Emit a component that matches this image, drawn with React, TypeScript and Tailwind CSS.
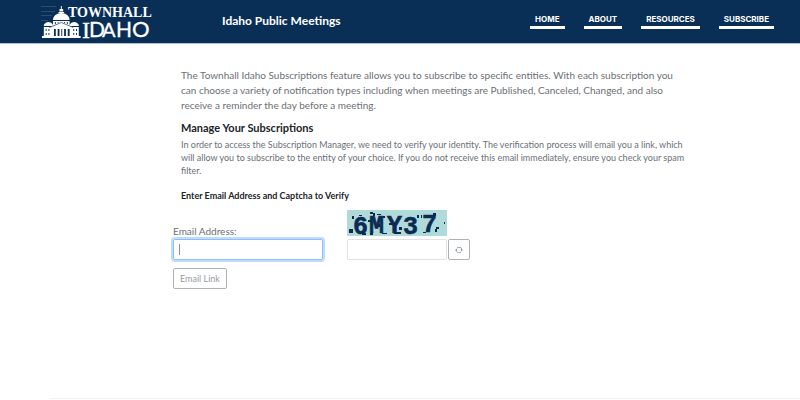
import React from "react";

const navItems = ["HOME", "ABOUT", "RESOURCES", "SUBSCRIBE"];

function Logo() {
  return (
    <svg viewBox="0 0 112 36" className="h-9 w-28 shrink-0 overflow-visible" role="img" aria-label="Townhall Idaho">
      <path d="M1 2.5H16M1 7.5H15M1 11.5H12M1 16.5H8" stroke="#2c4b70" strokeWidth="1" />
      <g transform="translate(2 1) scale(.92 1)">
        <g fill="#fff">
          <path d="M20.5 1h1v3h1.5v2.5h-4V4h1.5z" />
          <path d="M18 7h6v1h-6zM12 15c0-4 4-7 9-7s9 3 9 7z" />
          <path d="M12 16h18v4H12z" />
          <path d="M2 20c1-2 3-3 5-3s4 1 5 3h18c1-2 3-3 5-3s4 1 5 3v1H2z" />
          <path d="M9 22l12-5 12 5v2H9z" />
          <path d="M2 22h38v9H2zM0 31h42v2H0z" />
        </g>
        <g fill="#0a2f57">
          <path d="M14 17h1v2h-1zM17 17h1v1h-1zM24 17h1v1h-1zM27 17h1v2h-1z" />
          <path d="M13 24h2v7h-2zM17 24h2v7h-2zM21 24h1v7h-1zM24 24h2v7h-2zM28 24h2v7h-2z" />
          <path d="M4 24h1v2H4zM7 24h1v2H7zM4 28h1v2H4zM7 28h1v2H7zM34 24h1v2h-1zM37 24h1v2h-1zM34 28h1v2h-1zM37 28h1v2h-1z" />
          <path d="M8 22.5l13-5 13 5" fill="none" stroke="#0a2f57" strokeWidth=".7" />
        </g>
      </g>
      <g fill="#fff">
        <text x="28" y="13" fontSize="14" className="font-['Liberation_Serif'] font-bold">
          TOWNHALL
        </text>
        <text y="33" fontSize="20" stroke="#fff" strokeWidth=".3" className="font-['Lato']">
          <tspan x="42" y="34" fontSize="24" className="font-['Liberation_Serif']">I</tspan>
          <tspan x="49" y="33" fontSize="21">D</tspan>
          <tspan x="62">A</tspan>
          <tspan x="76" fontSize="21">H</tspan>
          <tspan x="92" fontSize="22">O</tspan>
        </text>
      </g>
    </svg>
  );
}

function Captcha() {
  return (
    <svg viewBox="0 0 100 26" className="block h-[26px] w-[100px] overflow-visible" role="img" aria-label="Captcha">
      <defs>
        <pattern id="weave" width="4" height="4" patternUnits="userSpaceOnUse">
          <rect width="4" height="4" fill="#9be4e4" />
          <path d="M0 0h2v2H0zM2 2h2v2H2z" fill="#c6d0cf" />
        </pattern>
      </defs>
      <rect width="100" height="26" fill="url(#weave)" />
      <text
        fill="#0a2b54"
        stroke="#0a2b54"
        strokeWidth=".6"
        fontSize="25"
        className="font-['Liberation_Mono'] font-bold"
      >
        <tspan x="6" y="24">6</tspan>
        <tspan x="22" y="23">M</tspan>
        <tspan x="40">Y</tspan>
        <tspan x="56" y="24">3</tspan>
        <tspan x="75" y="22">7</tspan>
      </text>
      <path
        fill="#0a2b54"
        d="M2 19h4v4H2zM5 6h2v3H5zM12 5h3v1h-3zM23 2h3v2h-3zM26 3h2v3h-2zM30 4h4v1h-4zM21 10h3v2h-3zM36 6h2v2h-2zM23 23h3v2h-3zM35 23h5v1h-5zM47 22h7v2h-7zM52 17h3v3h-3zM42 13h3v2h-3zM66 11h1v3h-1zM70 5h2v3h-2zM74 5h1v3h-1zM77 6h3v2h-3zM86 3h3v3h-3zM76 22h3v1h-3zM89 17h3v2h-3zM88 19h2v3h-2zM97 12h1v2h-1zM15 23h4v2h-4zM30 14h3v3h-3z"
      />
    </svg>
  );
}

function RefreshIcon() {
  return (
    <svg viewBox="0 0 16 16" className="size-2" fill="#6c757d" aria-hidden="true">
      <path d="M11.534 7h3.932a.25.25 0 0 1 .192.41l-1.966 2.36a.25.25 0 0 1-.384 0l-1.966-2.36a.25.25 0 0 1 .192-.41zm-11 2h3.932a.25.25 0 0 0 .192-.41L2.692 6.23a.25.25 0 0 0-.384 0L.342 8.59A.25.25 0 0 0 .534 9z" />
      <path d="M8 3c-1.552 0-2.94.707-3.857 1.818a.5.5 0 1 1-.771-.636A6.002 6.002 0 0 1 13.917 7H12.9A5.002 5.002 0 0 0 8 3zM3.1 9a5.002 5.002 0 0 0 8.757 2.182.5.5 0 1 1 .771.636A6.002 6.002 0 0 1 2.083 9H3.1z" />
    </svg>
  );
}

export default function App() {
  return (
    <div className="min-h-screen bg-white font-['Lato',sans-serif] text-[#6b7076]">
      <header className="flex items-start border-b border-[#b4bfd3] bg-[#0a2f57] pt-1 pr-[26px] pb-1 pl-10 text-white">
        <div className="flex h-[35px] items-center">
          <Logo />
        </div>
        <div className="ml-[70px] flex h-[34px] items-center text-[12px] font-bold">Idaho Public Meetings</div>
        <nav className="ml-auto flex gap-[19px] pt-2.5">
          {navItems.map((item) => (
            <a
              key={item}
              href="#"
              className="border-b-3 border-white px-[5px] pb-px font-['Inter',sans-serif] text-[8px] leading-[11px] font-bold"
            >
              {item}
            </a>
          ))}
        </nav>
      </header>

      <main className="px-[173px] pt-6">
        <section className="mr-[-70px] max-w-[524px] px-2">
          <p className="text-[10px] leading-[15px]">
            The Townhall Idaho Subscriptions feature allows you to subscribe to specific entities. With each subscription you
            can choose a variety of notification types including when meetings are Published, Canceled, Changed, and also
            receive a reminder the day before a meeting.
          </p>
          <h1 className="mt-2 text-[11px] leading-[13px] font-bold text-[#212529]">Manage Your Subscriptions</h1>
          <p className="mt-1 text-[9px] leading-[13px]">
            In order to access the Subscription Manager, we need to verify your identity. The verification process will email
            you a link, which will allow you to subscribe to the entity of your choice. If you do not receive this email
            immediately, ensure you check your spam filter.
          </p>
          <h2 className="mt-3 text-[9px] leading-[13px] font-bold text-[#212529]">Enter Email Address and Captcha to Verify</h2>
        </section>

        <form onSubmit={(e) => e.preventDefault()} className="mt-2">
          <div className="flex items-end gap-6">
            <div className="w-[150px]">
              <label htmlFor="email" className="block text-[10px] leading-[15px]">
                Email Address:
              </label>
              <div className="relative">
                <input
                  id="email"
                  type="email"
                  autoFocus
                  className="block h-[21px] w-full rounded-xs border border-[#8dbffb] px-1.5 text-[10px] caret-transparent ring-2 ring-[#bfdcff] outline-none"
                />
                <span className="pointer-events-none absolute top-[5px] left-1.5 h-[11px] w-px bg-[#8d9196]" />
              </div>
            </div>
            <div className="flex items-end gap-px">
              <div>
                <Captcha />
                <input
                  type="text"
                  aria-label="Captcha text"
                  className="mt-[3px] block h-[21px] w-[100px] rounded-xs border border-[#dfe2e6] px-1.5 text-[10px] outline-none"
                />
              </div>
              <button
                type="button"
                aria-label="Refresh captcha"
                className="flex h-[21px] w-[22px] items-center justify-center rounded-xs border border-[#adb2b7]"
              >
                <RefreshIcon />
              </button>
            </div>
          </div>
          <button type="submit" className="mt-2 block h-[21px] rounded-xs border border-[#adb2b7] px-1.5 text-[9px] text-[#979ca2]">
            Email Link
          </button>
        </form>
      </main>

      <hr className="mt-[109px] ml-[50px] border-[#f2f2f2]" />
    </div>
  );
}
